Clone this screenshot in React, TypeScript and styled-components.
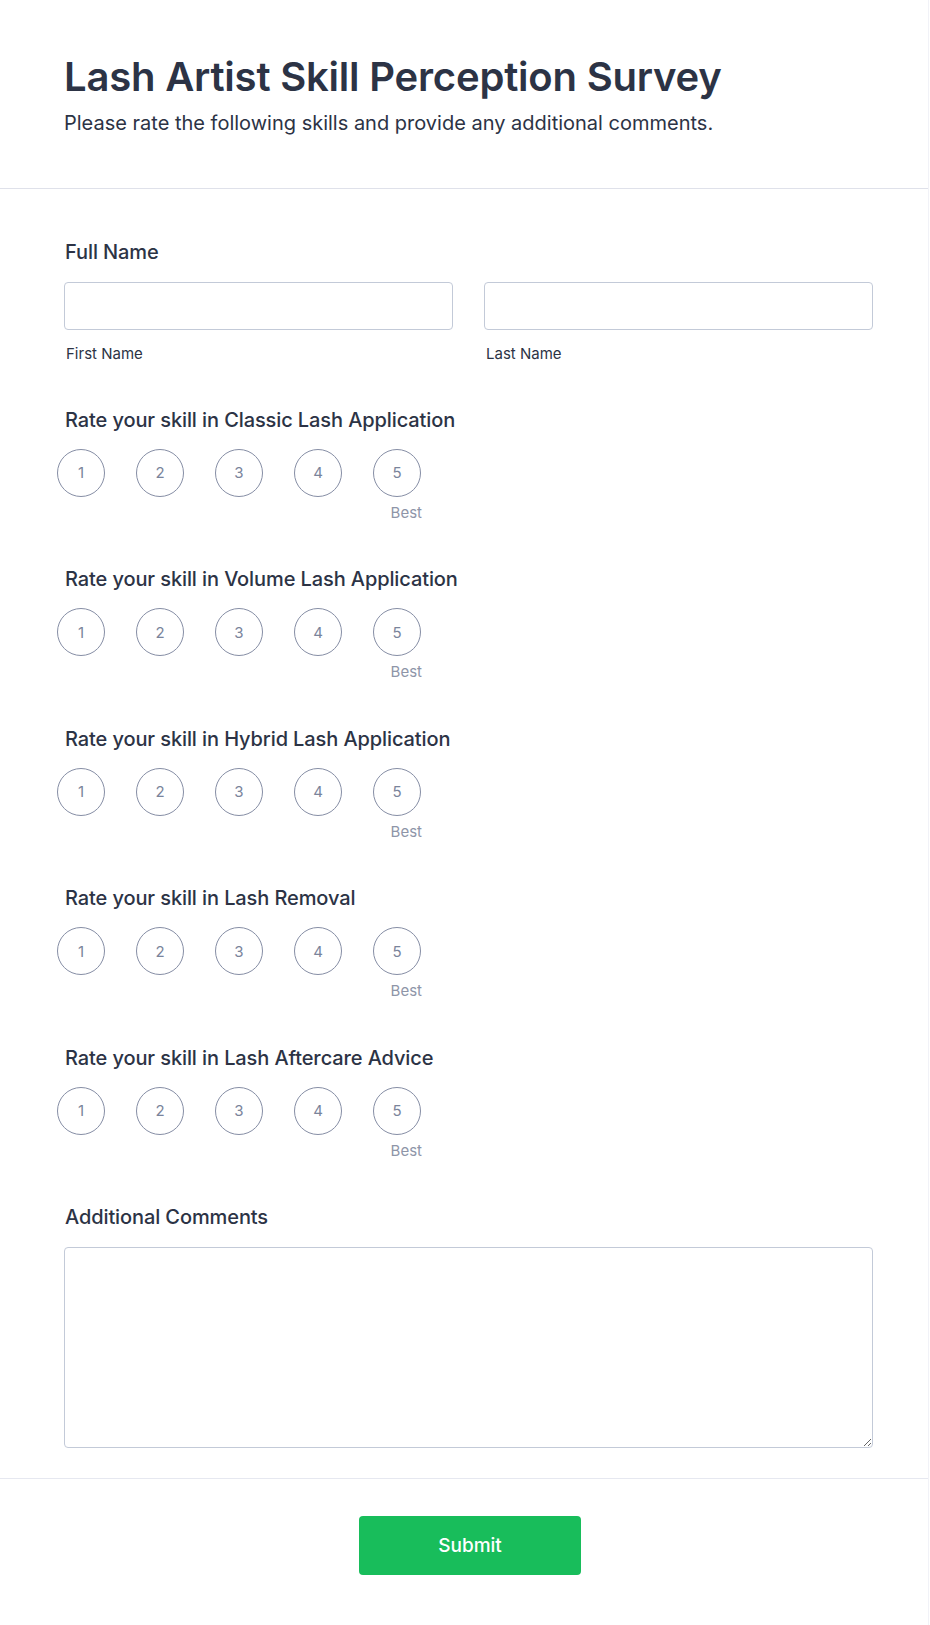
import React from "react";
import styled, { createGlobalStyle } from "styled-components";

const Global = createGlobalStyle`
  html, body { margin: 0; padding: 0; background: #ffffff; }
  body { font-family: Inter, "Noto Sans", Arial, sans-serif; color: #2c3345; }
  * { box-sizing: border-box; }
`;

const Page = styled.div`
  width: 929px;
  min-height: 1625px;
  border-right: 1px solid #f1f2f7;
  background: #fff;
`;

const Header = styled.header`
  padding: 53px 55px 53px 64px;
  border-bottom: 1px solid #dfe1ea;
`;

const Title = styled.h1`
  margin: 0;
  font-size: 40px;
  line-height: 48px;
  font-weight: 600;
  color: #2c3345;
  letter-spacing: -0.2px;
`;

const Subtitle = styled.p`
  margin: 10px 0 0;
  font-size: 20px;
  line-height: 24px;
  font-weight: 400;
  color: #2c3345;
`;

const Body = styled.div`
  padding: 51px 55px 30px 64px;
  display: flex;
  flex-direction: column;
  gap: 44.5px;
  border-bottom: 1px solid #e6e8f0;
`;

const Field = styled.div`
  display: flex;
  flex-direction: column;
`;

const FirstField = styled(Field)`
  margin-bottom: -1px;
`;

const Label = styled.label`
  display: block;
  font-size: 20px;
  line-height: 24px;
  font-weight: 500;
  letter-spacing: -0.1px;
  color: #2c3345;
  padding-left: 1px;
`;

const NameGrid = styled.div`
  display: grid;
  grid-template-columns: 1fr 1fr;
  column-gap: 31px;
  margin-top: 18px;
`;

const NameCol = styled.div`
  display: flex;
  flex-direction: column;
`;

const TextInput = styled.input`
  height: 48px;
  width: 100%;
  border: 1px solid #c3cad8;
  border-radius: 4px;
  background: #fff;
  font-family: inherit;
  font-size: 16px;
  padding: 0 12px;
  outline: none;
`;

const SubLabel = styled.span`
  margin-top: 14px;
  font-size: 15px;
  line-height: 20px;
  color: #2c3345;
  padding-left: 2px;
`;

const RatingWrap = styled.div`
  display: inline-flex;
  flex-direction: column;
  align-self: flex-start;
  margin-top: 17px;
  margin-left: -7px;
`;

const Circles = styled.div`
  display: flex;
  gap: 31px;
`;

const Circle = styled.button`
  width: 48px;
  height: 48px;
  border-radius: 50%;
  border: 1px solid #868ea5;
  background: #fff;
  color: #7a849b;
  font-family: inherit;
  font-size: 15px;
  font-weight: 400;
  display: flex;
  align-items: center;
  justify-content: center;
  padding: 0;
  cursor: pointer;
`;

const Best = styled.span`
  align-self: flex-end;
  margin-top: 6px;
  margin-right: -1px;
  font-size: 15px;
  line-height: 20px;
  color: #8e95a8;
`;

const TextArea = styled.textarea`
  margin-top: 18px;
  width: 100%;
  height: 201px;
  border: 1px solid #c3cad8;
  border-radius: 4px;
  font-family: inherit;
  font-size: 16px;
  padding: 10px 12px;
  outline: none;
  resize: vertical;
  display: block;
`;

const Footer = styled.div`
  display: flex;
  justify-content: center;
  padding: 37px 52px 50px 64px;
`;

const SubmitButton = styled.button`
  width: 222px;
  height: 59px;
  background: #18bd5b;
  border: none;
  border-radius: 4px;
  color: #fff;
  font-family: inherit;
  font-size: 19px;
  font-weight: 500;
  cursor: pointer;
`;

const skills = [
  "Classic Lash Application",
  "Volume Lash Application",
  "Hybrid Lash Application",
  "Lash Removal",
  "Lash Aftercare Advice",
];

const Rating: React.FC<{ label: string }> = ({ label }) => (
  <Field>
    <Label>Rate your skill in {label}</Label>
    <RatingWrap>
      <Circles>
        {[1, 2, 3, 4, 5].map((n) => (
          <Circle key={n} type="button">
            {n}
          </Circle>
        ))}
      </Circles>
      <Best>Best</Best>
    </RatingWrap>
  </Field>
);

export default function App() {
  return (
    <Page>
      <Global />
      <Header>
        <Title>Lash Artist Skill Perception Survey</Title>
        <Subtitle>Please rate the following skills and provide any additional comments.</Subtitle>
      </Header>
      <Body>
        <FirstField>
          <Label>Full Name</Label>
          <NameGrid>
            <NameCol>
              <TextInput type="text" />
              <SubLabel>First Name</SubLabel>
            </NameCol>
            <NameCol>
              <TextInput type="text" />
              <SubLabel>Last Name</SubLabel>
            </NameCol>
          </NameGrid>
        </FirstField>
        {skills.map((s) => (
          <Rating key={s} label={s} />
        ))}
        <Field>
          <Label>Additional Comments</Label>
          <TextArea />
        </Field>
      </Body>
      <Footer>
        <SubmitButton type="button">Submit</SubmitButton>
      </Footer>
    </Page>
  );
}
